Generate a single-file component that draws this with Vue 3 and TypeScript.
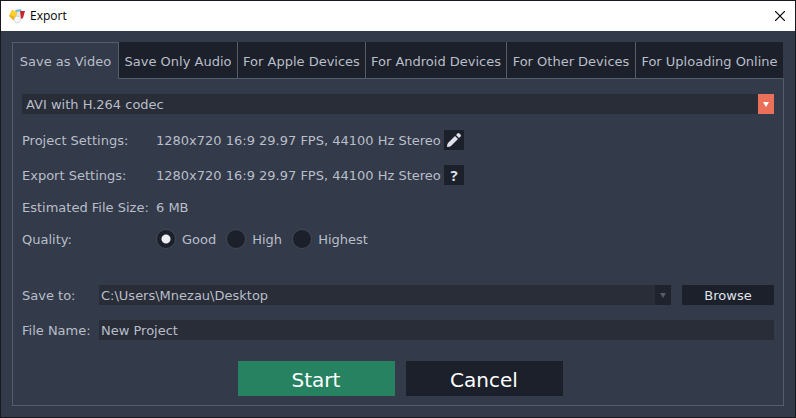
<script setup lang="ts">
import { ref } from 'vue'

const tabs = ['Save as Video', 'Save Only Audio', 'For Apple Devices', 'For Android Devices', 'For Other Devices', 'For Uploading Online']
const activeTab = ref(tabs[0])
const format = ref('AVI with H.264 codec')
const qualities = ['Good', 'High', 'Highest']
const quality = ref('Good')
const folder = ref('C:\\Users\\Mnezau\\Desktop')
const fileName = ref('New Project')
const mediaInfo = '1280x720 16:9 29.97 FPS, 44100 Hz Stereo'
</script>

<template>
  <main class="window">
    <header class="titlebar">
      <svg class="logo" viewBox="0 0 16 16" aria-hidden="true">
        <path d="M6 2 12 1 13 4 8 6Z" fill="#6cc3df" />
        <path d="M8 4 12 3 12 9 8 9Z" fill="#e3e8ec" />
        <path d="M11 3 16 3 14 10 12 11Z" fill="#c9252b" />
        <path d="M3 2 8 4 7 11 4 12 0 8Z" fill="#f0ae17" />
        <path d="M3 2 8 4 6 9 1 7Z" fill="#fbd02f" />
        <path d="M5 11Q6 8 8 8Q11 8 12 11Q11 15 8 15Q5 14 5 11Z" fill="#f8f8f8" stroke="#b9bdc2" stroke-width=".6" />
      </svg>
      <h1 class="title">Export</h1>
      <button class="close" type="button" aria-label="Close">
        <svg viewBox="0 0 10 10" aria-hidden="true"><path d="M0 0 10 10M10 0 0 10" stroke="#000" stroke-width="1.2" /></svg>
      </button>
    </header>

    <div class="body">
      <div class="tabs" role="tablist">
        <button
          v-for="tab in tabs"
          :key="tab"
          type="button"
          role="tab"
          class="tab"
          :class="{ active: tab === activeTab }"
          :aria-selected="tab === activeTab"
          @click="activeTab = tab"
        >{{ tab }}</button>
      </div>

      <form class="panel" @submit.prevent>
        <div class="combo format">
          <select v-model="format" class="field" aria-label="Format">
            <option>AVI with H.264 codec</option>
          </select>
          <span class="arrow accent"><svg viewBox="0 0 8 5" aria-hidden="true"><path d="M1 0H7L4 5Z" /></svg></span>
        </div>

        <div class="row setting">
          <span class="label">Project Settings:</span>
          <span class="info">{{ mediaInfo }}</span>
          <button class="icon" type="button" aria-label="Edit project settings">
            <svg viewBox="0 0 20 20" aria-hidden="true">
              <path d="M3 17Q3 14 4 13L11 6 14 9 7 16Q6 17 3 17Z" fill="#dfe2ec" />
              <path d="M12 5 14 3Q15 3 16 4Q17 5 17 6L15 8Z" fill="#dfe2ec" />
            </svg>
          </button>
        </div>
        <div class="row setting">
          <span class="label">Export Settings:</span>
          <span class="info">{{ mediaInfo }}</span>
          <button class="icon help" type="button">?</button>
        </div>
        <div class="row size">
          <span class="label">Estimated File Size:</span>
          <span class="info">6 MB</span>
        </div>
        <div class="row quality" role="radiogroup" aria-labelledby="quality-label">
          <span id="quality-label" class="label">Quality:</span>
          <label v-for="item in qualities" :key="item" class="option">
            <input v-model="quality" class="radio" type="radio" name="quality" :value="item" />
            <span class="option-text">{{ item }}</span>
          </label>
        </div>

        <div class="row save">
          <label class="short" for="folder">Save to:</label>
          <div class="combo">
            <select id="folder" v-model="folder" class="field">
              <option>C:\Users\Mnezau\Desktop</option>
            </select>
            <span class="arrow"><svg viewBox="0 0 8 5" aria-hidden="true"><path d="M1 0H7L4 5Z" /></svg></span>
          </div>
          <button class="browse" type="button">Browse</button>
        </div>
        <div class="row file">
          <label class="short" for="file">File Name:</label>
          <input id="file" v-model="fileName" class="field" type="text" />
        </div>

        <div class="actions">
          <button class="action start" type="submit">Start</button>
          <button class="action" type="button">Cancel</button>
        </div>
      </form>
    </div>
  </main>
</template>

<style>
body {
  background: #333a49;
}
</style>

<style scoped>
.window {
  box-sizing: border-box;
  min-height: 100vh;
  display: flex;
  flex-direction: column;
  border: 1px solid #181a20;
  background: #333a49;
  color: #b9bec9;
  font: 13px/20px 'DejaVu Sans', Verdana, sans-serif;
}

button,
input,
select {
  box-sizing: border-box;
  margin: 0;
  padding: 0;
  border: 0;
  border-radius: 0;
  color: inherit;
  font: inherit;
}

svg {
  display: block;
}

.titlebar {
  display: flex;
  align-items: center;
  gap: 5px;
  height: 30px;
  padding: 0 10px 0 8px;
  background: #fff;
  color: #000;
}

.logo {
  width: 16px;
  height: 16px;
}

.title {
  flex: 1;
  margin: 0;
  font: 12px/20px 'Open Sans', 'Noto Sans', sans-serif;
}

.close {
  background: none;
}

.close svg {
  width: 10px;
  height: 10px;
}

.body {
  flex: 1;
  display: flex;
  flex-direction: column;
  padding: 11px;
}

.tabs {
  display: grid;
  grid-template-columns: 107fr 119fr 128fr 141fr 129fr 148fr;
}

.tab {
  height: 37px;
  padding-top: 3px;
  border: solid #555c6a;
  border-width: 0 1px 1px 0;
  background: #1c202a;
  white-space: nowrap;
}

.tab:last-child {
  border-right-color: #333a49;
}

.tab.active {
  padding-top: 1px;
  border-width: 1px 1px 0 1px;
  background: #333a49;
}

.panel {
  flex: 1;
  padding: 15px 9px 9px;
  border: solid #555c6a;
  border-width: 0 1px 1px;
}

.combo {
  flex: 1;
  display: grid;
  grid-template-columns: 1fr 16px;
}

.combo .field {
  grid-area: 1 / 1 / 2 / 3;
  padding-top: 1px;
}

.field {
  flex: 1;
  min-width: 0;
  height: 20px;
  padding: 2px 2px 0;
  appearance: none;
  background: #282d38;
  outline: none;
}

.format .field {
  padding: 1px 4px 0;
}

.arrow {
  grid-area: 1 / 2;
  display: grid;
  place-items: center;
  background: #1f232d;
  color: #555b68;
  pointer-events: none;
}

.arrow.accent {
  background: #eb705a;
  color: #fff;
}

.arrow svg {
  width: 8px;
  height: 5px;
  fill: currentColor;
}

.row {
  display: flex;
  align-items: center;
  height: 20px;
}

.setting {
  margin-top: 15px;
}

.format + .setting {
  margin-top: 16px;
}

.size,
.quality {
  margin-top: 12px;
}

.label,
.info,
.short,
.option-text {
  padding-top: 2px;
  white-space: nowrap;
}

.label {
  width: 134px;
}

.info {
  width: 288px;
}

.icon {
  width: 20px;
  height: 20px;
  background: #1c202a;
  color: #dfe2ec;
}

.help {
  font: bold 15px/20px 'Open Sans', 'Noto Sans', sans-serif;
}

.option {
  display: flex;
  align-items: center;
  gap: 6px;
  margin-right: 10px;
}

.radio {
  width: 20px;
  height: 20px;
  border: 1px solid #424857;
  border-radius: 50%;
  appearance: none;
  background: #1c202a;
}

.radio:checked {
  background: radial-gradient(circle, #eceef2 4px, #1c202a 5px);
}

.save {
  margin-top: 36px;
}

.file {
  margin-top: 15px;
}

.short {
  width: 77px;
}

.browse {
  width: 92px;
  height: 20px;
  margin-left: 11px;
  padding-top: 1px;
  background: #1c202a;
  color: #dfe2ec;
}

.actions {
  display: flex;
  justify-content: center;
  gap: 11px;
  margin-top: 21px;
  padding-left: 4px;
}

.action {
  width: 157px;
  height: 35px;
  padding-top: 2px;
  background: #1c202a;
  color: #fff;
  font-size: 20px;
}

.start {
  background: #268260;
}
</style>
